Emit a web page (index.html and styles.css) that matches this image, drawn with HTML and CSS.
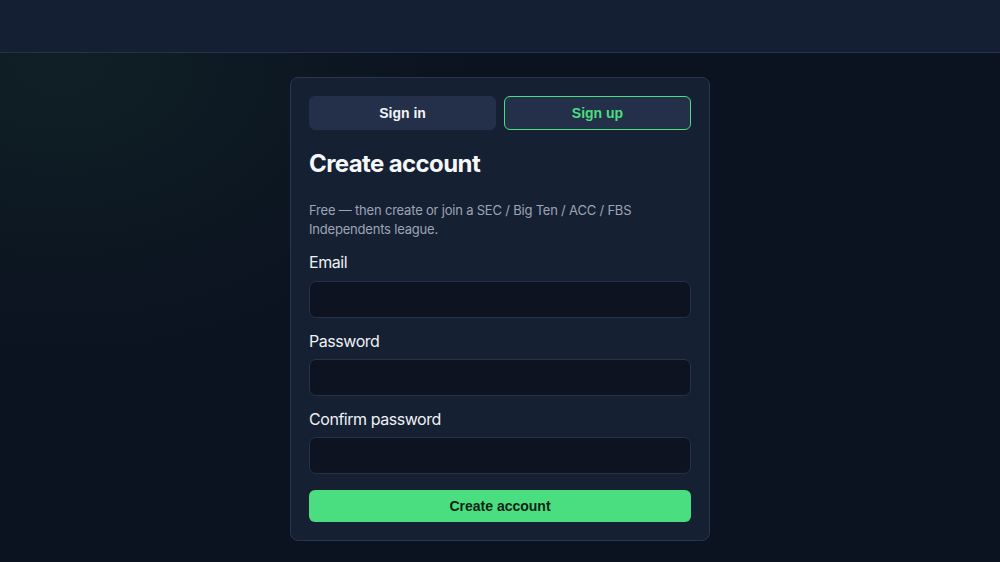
FILE: index.html
```html
<!DOCTYPE html>
<html lang="en">
<head>
<meta charset="utf-8">
<title>Create account</title>
<link rel="stylesheet" href="styles.css">
</head>
<body>
<header class="topbar"></header>
<main class="page">
  <section class="card">
    <div class="tabs">
      <button class="tab">Sign in</button>
      <button class="tab tab-active">Sign up</button>
    </div>
    <h1 class="title">Create account</h1>
    <p class="sub">Free — then create or join a SEC / Big Ten / ACC / FBS Independents league.</p>
    <div class="field field-first">
      <label class="label">Email</label>
      <input class="input" type="email">
    </div>
    <div class="field">
      <label class="label">Password</label>
      <input class="input" type="password">
    </div>
    <div class="field">
      <label class="label">Confirm password</label>
      <input class="input" type="password">
    </div>
    <button class="submit">Create account</button>
  </section>
</main>
</body>
</html>
```
FILE: styles.css
```css
* { box-sizing: border-box; }
html, body { margin: 0; height: 100%; }
body {
  font-family: Inter, "Noto Sans", sans-serif;
  color: #e5e9f0;
  background:
    radial-gradient(ellipse 420px 300px at 60px 60px, rgba(30, 80, 55, 0.22), rgba(30,80,55,0) 100%),
    #0b1220;
  min-height: 562px;
}
.topbar {
  height: 53px;
  background: #151f33;
  border-bottom: 1px solid #263349;
}
.page {
  display: flex;
  justify-content: center;
  padding-top: 24px;
}
.card {
  width: 420px;
  background: #162033;
  border: 1px solid #283650;
  border-radius: 8px;
  padding: 18px;
  display: flex;
  flex-direction: column;
}
.tabs {
  display: grid;
  grid-template-columns: 1fr 1fr;
  gap: 8px;
}
.tab {
  height: 34px;
  border: 1px solid #243049;
  border-radius: 6px;
  background: #243049;
  color: #f1f4f8;
  font-family: "Liberation Sans", Arial, sans-serif;
  font-weight: 700;
  font-size: 14px;
  cursor: pointer;
}
.tab-active {
  border-color: #4ade80;
  color: #4ade80;
}
.title {
  margin: 18px 0 0;
  font-size: 24px;
  line-height: 32px;
  font-weight: 700;
  color: #f5f7fa;
  letter-spacing: -0.6px;
}
.sub {
  margin: 21px 0 0;
  font-size: 13px;
  line-height: 19px;
  color: #9ca5b5;
  letter-spacing: -0.2px;
}
.field {
  display: flex;
  flex-direction: column;
  gap: 8px;
  margin-top: 13px;
}
.field-first { gap: 9px; }
.label {
  font-size: 16px;
  line-height: 20px;
  color: #eef1f5;
  letter-spacing: -0.45px;
}
.input {
  height: 37px;
  width: 100%;
  background: #0d1320;
  border: 1px solid #253249;
  border-radius: 7px;
  color: #e5e9f0;
  font-size: 14px;
  padding: 0 10px;
}
.submit {
  margin-top: 16px;
  height: 32px;
  border: none;
  border-radius: 6px;
  background: #4ade80;
  color: #0d2417;
  font-family: "Liberation Sans", Arial, sans-serif;
  font-weight: 700;
  font-size: 14px;
  cursor: pointer;
}
```
